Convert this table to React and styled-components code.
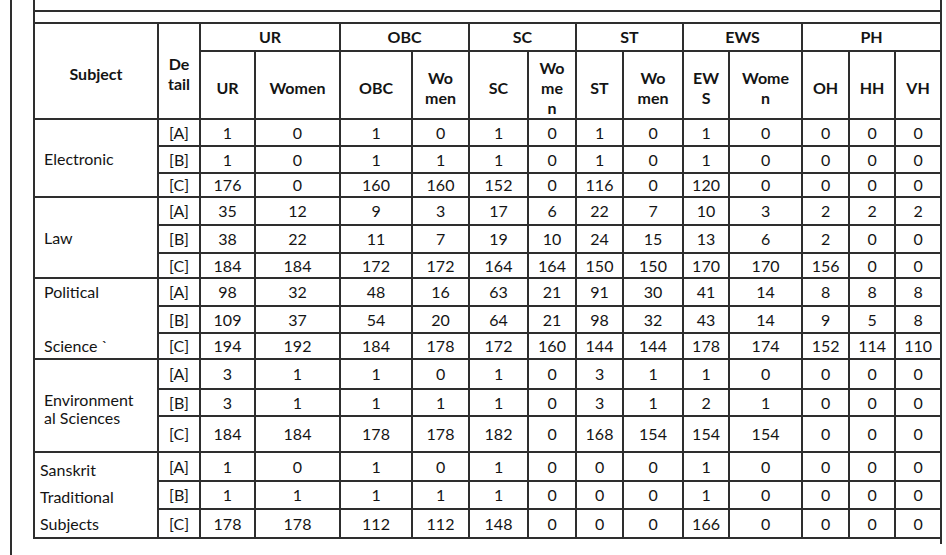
import React from "react";
import styled, { createGlobalStyle } from "styled-components";

const Global = createGlobalStyle`
  html, body { margin: 0; padding: 0; background: #fff; }
  body { font-family: Lato, "Open Sans", sans-serif; color: #141414; }
`;

const LINE = "#2e2e2e";

const Page = styled.div`
  height: 555px;
  padding-left: 10px;
  box-sizing: border-box;
  overflow: hidden;
`;

const Sheet = styled.div`
  height: 555px;
  border-left: 2px solid ${LINE};
  padding-left: 21px;
  box-sizing: border-box;
`;

const Panel = styled.div`
  width: 909px;
  display: flex;
  flex-direction: column;
`;

const TopStrip = styled.div`
  height: 10px;
  border-left: 2px solid ${LINE};
  border-right: 2px solid ${LINE};
  border-bottom: 2px solid ${LINE};
`;

const Spacer = styled.div`
  height: ${(p) => p.$h}px;
  border-left: ${(p) => (p.$noLeft ? "none" : `2px solid ${LINE}`)};
  border-right: 2px solid ${LINE};
`;

const Table = styled.table`
  width: 909px;
  border-collapse: collapse;
  table-layout: fixed;
  font-size: 16px;
`;

const HeadCell = styled.th`
  border: 2px solid ${LINE};
  font-weight: 700;
  font-size: 16px;
  line-height: 20px;
  text-align: center;
  vertical-align: middle;
  padding: ${(p) => (p.$top ? "0" : "6px 0 0 0")};
  box-sizing: border-box;
`;

const SubjectCell = styled.td`
  border: 2px solid ${LINE};
  text-align: left;
  vertical-align: middle;
  padding: ${(p) => p.$pad || "0 0 0 9px"};
`;

const SubjectText = styled.div`
  display: flex;
  flex-direction: column;
  gap: ${(p) => p.$gap}px;
  line-height: ${(p) => p.$lh || 19}px;
`;

const Cell = styled.td`
  border: 2px solid ${LINE};
  text-align: center;
  vertical-align: middle;
  padding: 0;
  line-height: 18px;
`;

const cols = [124, 42, 55, 85, 72, 57, 59, 48, 47, 60, 46, 73, 47, 46, 46];

const groups = [
  {
    name: ["Electronic"],
    gap: 0,
    heights: [27, 27, 24],
    rows: [
      ["1", "0", "1", "0", "1", "0", "1", "0", "1", "0", "0", "0", "0"],
      ["1", "0", "1", "1", "1", "0", "1", "0", "1", "0", "0", "0", "0"],
      ["176", "0", "160", "160", "152", "0", "116", "0", "120", "0", "0", "0", "0"],
    ],
  },
  {
    name: ["Law"],
    gap: 0,
    heights: [28, 28, 25],
    rows: [
      ["35", "12", "9", "3", "17", "6", "22", "7", "10", "3", "2", "2", "2"],
      ["38", "22", "11", "7", "19", "10", "24", "15", "13", "6", "2", "0", "0"],
      ["184", "184", "172", "172", "164", "164", "150", "150", "170", "170", "156", "0", "0"],
    ],
  },
  {
    name: ["Political", "Science `"],
    gap: 35,
    pad: "0 0 0 9px",
    heights: [28, 27, 26],
    rows: [
      ["98", "32", "48", "16", "63", "21", "91", "30", "41", "14", "8", "8", "8"],
      ["109", "37", "54", "20", "64", "21", "98", "32", "43", "14", "9", "5", "8"],
      ["194", "192", "184", "178", "172", "160", "144", "144", "178", "174", "152", "114", "110"],
    ],
  },
  {
    name: ["Environment", "al Sciences"],
    gap: 0,
    lh: 18,
    pad: "6px 0 0 9px",
    heights: [30, 27, 36],
    rows: [
      ["3", "1", "1", "0", "1", "0", "3", "1", "1", "0", "0", "0", "0"],
      ["3", "1", "1", "1", "1", "0", "3", "1", "2", "1", "0", "0", "0"],
      ["184", "184", "178", "178", "182", "0", "168", "154", "154", "154", "0", "0", "0"],
    ],
  },
  {
    name: ["Sanskrit", "Traditional", "Subjects"],
    gap: 8,
    pad: "2px 0 0 5px",
    heights: [29, 28, 29],
    rows: [
      ["1", "0", "1", "0", "1", "0", "0", "0", "1", "0", "0", "0", "0"],
      ["1", "1", "1", "1", "1", "0", "0", "0", "1", "0", "0", "0", "0"],
      ["178", "178", "112", "112", "148", "0", "0", "0", "166", "0", "0", "0", "0"],
    ],
  },
];

const topHeads = [
  ["UR", 2],
  ["OBC", 2],
  ["SC", 2],
  ["ST", 2],
  ["EWS", 2],
  ["PH", 3],
];

const subHeads = [
  ["UR"],
  ["Women"],
  ["OBC"],
  ["Wo", "men"],
  ["SC"],
  ["Wo", "me", "n"],
  ["ST"],
  ["Wo", "men"],
  ["EW", "S"],
  ["Wome", "n"],
  ["OH"],
  ["HH"],
  ["VH"],
];

const Lines = ({ parts }) =>
  parts.map((p, i) => (
    <React.Fragment key={i}>
      {i > 0 && <br />}
      {p}
    </React.Fragment>
  ));

const details = ["[A]", "[B]", "[C]"];

export default function App() {
  return (
    <>
      <Global />
      <Page>
        <Sheet>
          <Panel>
            <TopStrip />
            <Spacer $h={10} />
            <Table>
              <colgroup>
                {cols.map((w, i) => (
                  <col key={i} style={{ width: w }} />
                ))}
              </colgroup>
              <thead>
                <tr style={{ height: 28 }}>
                  <HeadCell rowSpan={2}>Subject</HeadCell>
                  <HeadCell rowSpan={2}>
                    De
                    <br />
                    tail
                  </HeadCell>
                  {topHeads.map(([t, span]) => (
                    <HeadCell key={t} colSpan={span} $top>
                      {t}
                    </HeadCell>
                  ))}
                </tr>
                <tr style={{ height: 66 }}>
                  {subHeads.map((parts, i) => (
                    <HeadCell key={i}>
                      <Lines parts={parts} />
                    </HeadCell>
                  ))}
                </tr>
              </thead>
              <tbody>
                {groups.map((g) =>
                  g.rows.map((row, ri) => (
                    <tr key={g.name[0] + ri} style={{ height: g.heights[ri] }}>
                      {ri === 0 && (
                        <SubjectCell rowSpan={3} $pad={g.pad}>
                          <SubjectText $gap={g.gap} $lh={g.lh}>
                            {g.name.map((n) => (
                              <span key={n}>{n}</span>
                            ))}
                          </SubjectText>
                        </SubjectCell>
                      )}
                      <Cell>{details[ri]}</Cell>
                      {row.map((v, ci) => (
                        <Cell key={ci}>{v}</Cell>
                      ))}
                    </tr>
                  ))
                )}
              </tbody>
            </Table>
            <Spacer $h={5} $noLeft />
          </Panel>
        </Sheet>
      </Page>
    </>
  );
}
